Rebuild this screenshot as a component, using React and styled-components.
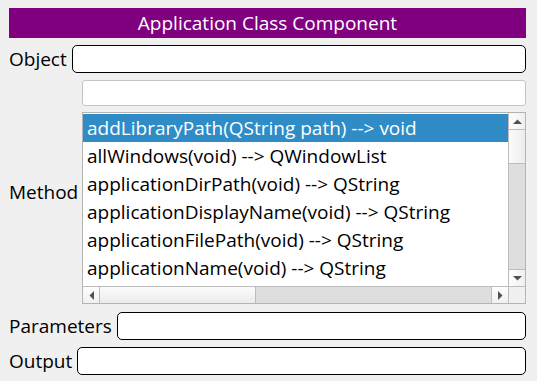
import React from "react";
import styled, { createGlobalStyle } from "styled-components";

const Global = createGlobalStyle`
  html, body { margin: 0; padding: 0; background: #f0f0f0; }
  body { font-family: "Open Sans", "Noto Sans", sans-serif; }
`;

const Page = styled.div`
  width: 537px;
  height: 381px;
  box-sizing: border-box;
  padding: 8px 11px 0 9px;
  display: flex;
  flex-direction: column;
  background: #f0f0f0;
  font-family: "Open Sans", "Noto Sans", sans-serif;
  font-size: 19px;
  color: #000;
`;

const Header = styled.div`
  height: 30px;
  background: #800080;
  color: #fff;
  font-size: 19px;
  display: flex;
  align-items: center;
  justify-content: center;
`;

const Row = styled.div`
  display: flex;
  align-items: center;
  gap: 5px;
  margin-top: ${(p) => p.$mt || 7}px;
  height: 28px;
`;

const MethodGrid = styled.div`
  display: grid;
  grid-template-columns: 68px 1fr;
  grid-template-rows: 26px 192px;
  column-gap: 5px;
  row-gap: 6px;
  margin-top: 7px;
`;

const Label = styled.div`
  white-space: nowrap;
  line-height: 24px;
  ${(p) => p.$span && "grid-row: 1 / 3; grid-column: 1; align-self: center;"}
`;

const RoundInput = styled.div`
  flex: 1;
  height: 28px;
  box-sizing: border-box;
  background: #fff;
  border: 1px solid #000;
  border-radius: 5px;
`;

const PlainInput = styled.div`
  grid-column: 2;
  grid-row: 1;
  box-sizing: border-box;
  background: #fff;
  border: 1px solid #c4c4c4;
  border-radius: 3px;
`;

const ListBox = styled.div`
  grid-column: 2;
  grid-row: 2;
  box-sizing: border-box;
  border: 1px solid #b4b4b4;
  background: #fff;
  display: grid;
  grid-template-columns: 1fr 17px;
  grid-template-rows: 1fr 17px;
  min-width: 0;
`;

const Items = styled.div`
  overflow: hidden;
  padding-top: 1px;
`;

const Item = styled.div`
  height: 28px;
  line-height: 28px;
  padding-left: 4px;
  white-space: nowrap;
  background: ${(p) => (p.$sel ? "#308cc6" : "transparent")};
  color: ${(p) => (p.$sel ? "#fff" : "#000")};
`;

const VBar = styled.div`
  display: flex;
  flex-direction: column;
  border-left: 1px solid #bdbdbd;
  background: #dedede;
`;

const HBar = styled.div`
  display: flex;
  border-top: 1px solid #bdbdbd;
  background: #dedede;
`;

const Btn = styled.div`
  flex: 0 0 16px;
  display: flex;
  align-items: center;
  justify-content: center;
  background: linear-gradient(${(p) => (p.$h ? "180deg" : "90deg")}, #fdfdfd, #f0f0f0);
  ${(p) => p.$edge}: 1px solid #bdbdbd;
`;

const Handle = styled.div`
  flex: 0 0 ${(p) => p.$size}px;
  background: linear-gradient(${(p) => (p.$h ? "180deg" : "90deg")}, #fbfbfb, #ececec);
  ${(p) => p.$edge}: 1px solid #bdbdbd;
`;

const Track = styled.div`
  flex: 1;
`;

const Corner = styled.div`
  border-left: 1px solid #bdbdbd;
  border-top: 1px solid #bdbdbd;
  background: #f0f0f0;
`;

const Arrow = ({ dir }) => {
  const pts = {
    up: "0,5 4.5,0.5 9,5",
    down: "0,0 9,0 4.5,4.5",
    left: "5,0 5,9 0.5,4.5",
    right: "0,0 0,9 4.5,4.5",
  }[dir];
  const vert = dir === "up" || dir === "down";
  return (
    <svg width={vert ? 9 : 5} height={vert ? 5 : 9} viewBox={vert ? "0 0 9 5" : "0 0 5 9"}>
      <polygon points={pts} fill="#505050" />
    </svg>
  );
};

const methods = [
  "addLibraryPath(QString path) --> void",
  "allWindows(void) --> QWindowList",
  "applicationDirPath(void) --> QString",
  "applicationDisplayName(void) --> QString",
  "applicationFilePath(void) --> QString",
  "applicationName(void) --> QString",
];

export default function App() {
  return (
    <>
      <Global />
      <Page>
        <Header>Application Class Component</Header>
        <Row>
          <Label>Object</Label>
          <RoundInput />
        </Row>
        <MethodGrid>
          <Label $span>Method</Label>
          <PlainInput />
          <ListBox>
            <Items>
              {methods.map((m, i) => (
                <Item key={m} $sel={i === 0}>
                  {m}
                </Item>
              ))}
            </Items>
            <VBar>
              <Btn $edge="border-bottom">
                <Arrow dir="up" />
              </Btn>
              <Handle $size={33} $edge="border-bottom" />
              <Track />
              <Btn $edge="border-top">
                <Arrow dir="down" />
              </Btn>
            </VBar>
            <HBar>
              <Btn $h $edge="border-right">
                <Arrow dir="left" />
              </Btn>
              <Handle $h $size={155} $edge="border-right" />
              <Track />
              <Btn $h $edge="border-left">
                <Arrow dir="right" />
              </Btn>
            </HBar>
            <Corner />
          </ListBox>
        </MethodGrid>
        <Row $mt={8}>
          <Label>Parameters</Label>
          <RoundInput />
        </Row>
        <Row>
          <Label>Output</Label>
          <RoundInput />
        </Row>
      </Page>
    </>
  );
}
